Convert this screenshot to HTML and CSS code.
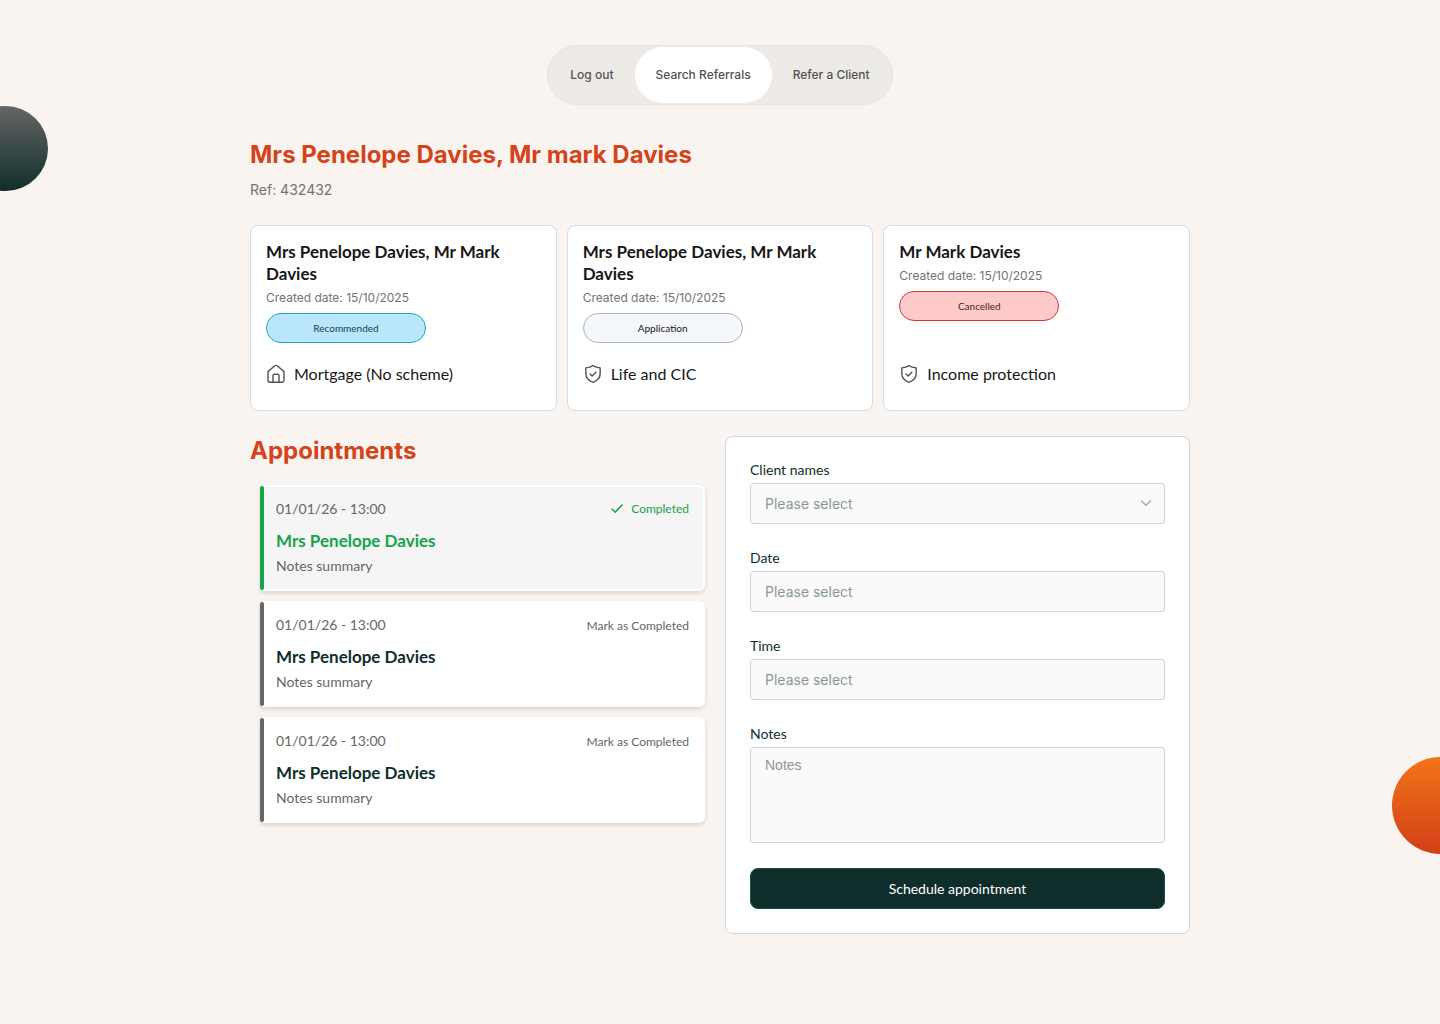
FILE: index.html
```html
<!DOCTYPE html>
<html lang="en">
<head>
  <meta charset="UTF-8">
  <meta name="viewport" content="width=device-width, initial-scale=1">
  <title>Mrs Penelope Davies, Mr mark Davies</title>
  <link rel="stylesheet" href="styles.css">
</head>
<body>

<!-- Background shapes -->
<div class="circle circle-dark"></div>
<div class="circle circle-orange"></div>

<!-- Shared icons -->
<svg class="sprite" aria-hidden="true">
  <symbol id="icon-shield" viewBox="0 0 24 24">
    <path d="M12 1.8 C10 3.6 6.8 4.5 3.4 4.6 V11.5 C3.4 17 7.2 20.4 12 22 C16.8 20.4 20.6 17 20.6 11.5 V4.6 C17.2 4.5 14 3.6 12 1.8 Z"/>
    <path d="M8.6 12 l2.4 2.4 l4.4 -4.4"/>
  </symbol>
</svg>

<nav class="nav">
  <a href="#">Log out</a>
  <a href="#" class="active">Search Referrals</a>
  <a href="#">Refer a Client</a>
</nav>

<main class="container">
  <h1>Mrs Penelope Davies, Mr mark Davies</h1>
  <p class="ref">Ref: 432432</p>

  <!-- Cases -->
  <section class="cases">
    <article class="case-card">
      <h3>Mrs Penelope Davies, Mr Mark Davies</h3>
      <p class="created">Created date: 15/10/2025</p>
      <span class="status recommended">Recommended</span>
      <div class="product">
        <svg viewBox="0 0 24 24">
          <path d="M2.4 10.4 c0 -1 .4 -1.8 1.2 -2.4 l6.6 -5.6 a2.8 2.8 0 0 1 3.6 0 l6.6 5.6 c.8 .6 1.2 1.4 1.2 2.4 V19.6 a2.2 2.2 0 0 1 -2.2 2.2 H4.6 a2.2 2.2 0 0 1 -2.2 -2.2 Z"/>
          <path d="M8.4 21.6 V14 a1.8 1.8 0 0 1 1.8 -1.8 h3.6 a1.8 1.8 0 0 1 1.8 1.8 V21.6"/>
        </svg>
        <span>Mortgage (No scheme)</span>
      </div>
    </article>
    <article class="case-card">
      <h3>Mrs Penelope Davies, Mr Mark Davies</h3>
      <p class="created">Created date: 15/10/2025</p>
      <span class="status application">Application</span>
      <div class="product">
        <svg><use href="#icon-shield"/></svg>
        <span>Life and CIC</span>
      </div>
    </article>
    <article class="case-card">
      <h3>Mr Mark Davies</h3>
      <p class="created">Created date: 15/10/2025</p>
      <span class="status cancelled">Cancelled</span>
      <div class="product">
        <svg><use href="#icon-shield"/></svg>
        <span>Income protection</span>
      </div>
    </article>
  </section>

  <div class="columns">
    <!-- Appointments -->
    <section class="appointments">
      <h2>Appointments</h2>
      <article class="appointment completed">
        <div class="appointment-top">
          <time>01/01/26 - 13:00</time>
          <span class="mark">
            <svg viewBox="0 0 12 12"><path d="M1 6 L4.2 9.2 L11 2"/></svg>
            Completed
          </span>
        </div>
        <h3>Mrs Penelope Davies</h3>
        <p>Notes summary</p>
      </article>
      <article class="appointment">
        <div class="appointment-top">
          <time>01/01/26 - 13:00</time>
          <button type="button" class="mark">Mark as Completed</button>
        </div>
        <h3>Mrs Penelope Davies</h3>
        <p>Notes summary</p>
      </article>
      <article class="appointment">
        <div class="appointment-top">
          <time>01/01/26 - 13:00</time>
          <button type="button" class="mark">Mark as Completed</button>
        </div>
        <h3>Mrs Penelope Davies</h3>
        <p>Notes summary</p>
      </article>
    </section>

    <!-- Schedule form -->
    <form class="schedule">
      <label for="client">Client names</label>
      <div class="select-wrap">
        <select id="client">
          <option value="">Please select</option>
        </select>
        <svg viewBox="0 0 12 12"><path d="M1.5 4 L6 8.2 L10.5 4"/></svg>
      </div>

      <label for="date">Date</label>
      <input type="text" id="date" placeholder="Please select">

      <label for="time">Time</label>
      <input type="text" id="time" placeholder="Please select">

      <label for="notes">Notes</label>
      <textarea id="notes" placeholder="Notes"></textarea>

      <button type="submit" class="submit">Schedule appointment</button>
    </form>
  </div>
</main>

</body>
</html>
```
FILE: styles.css
```css
* {
  box-sizing: border-box;
}

body {
  position: relative;
  min-height: 100vh;
  margin: 0;
  padding: 45px 20px 20px;
  overflow-x: hidden;
  background: #f9f4f0;
  color: #171717;
  font-family: Lato, sans-serif;
}

h1, h2, h3, p {
  margin: 0;
}

svg {
  fill: none;
  stroke: currentColor;
  stroke-linecap: round;
  stroke-linejoin: round;
}

.sprite {
  position: absolute;
  width: 0;
  height: 0;
}

/* Background shapes */
.circle {
  position: absolute;
  border-radius: 50%;
}

.circle-dark {
  top: 106px;
  left: -37px;
  width: 85px;
  height: 85px;
  background: linear-gradient(#666, #0f2e2b);
}

.circle-orange {
  top: 757px;
  right: -49px;
  width: 97px;
  height: 97px;
  background: linear-gradient(#f27419, #d23f17);
}

/* Navigation */
.nav {
  display: flex;
  width: fit-content;
  height: 60px;
  margin: 0 auto;
  padding: 1px;
  border: 1px solid #e8e5e2;
  border-radius: 30px;
  background: #eeebe6;
}

.nav a {
  display: flex;
  align-items: center;
  padding: 0 21px 2px;
  border-radius: 28px;
  color: #525252;
  font-family: Inter, sans-serif;
  font-size: 12px;
  font-weight: 500;
  text-decoration: none;
}

.nav .active {
  background: white;
}

.container {
  max-width: 940px;
  margin: 35px auto 0;
}

h1, h2 {
  color: #d4431a;
  font-family: Inter, sans-serif;
  font-size: 24px;
  line-height: 30px;
}

.ref {
  margin-top: 10px;
  color: #737373;
  font-family: Inter, sans-serif;
  font-size: 14px;
  line-height: 20px;
}

/* Cases */
.cases {
  display: grid;
  grid-template-columns: repeat(3, 1fr);
  gap: 10px;
  margin-top: 25px;
}

.case-card {
  display: flex;
  flex-direction: column;
  align-items: flex-start;
  padding: 15px 15px 24px;
  border: 1px solid #d3dde8;
  border-radius: 8px;
  background: white;
}

h3 {
  font-size: 17px;
  font-weight: 700;
  line-height: 22px;
}

.created {
  margin: 2px 0 4px;
  color: #737373;
  font-family: Inter, sans-serif;
  font-size: 12px;
  line-height: 22px;
}

.status {
  display: flex;
  align-items: center;
  justify-content: center;
  width: 160px;
  height: 30px;
  margin-bottom: 19px;
  border: 1px solid;
  border-radius: 15px;
  font-size: 10px;
}

.recommended {
  border-color: #2b9fc0;
  background: #bae6fd;
  color: #12404f;
}

.application {
  border-color: #a9b3c0;
  background: #f4f8fb;
}

.cancelled {
  border-color: #d9333c;
  background: #fecaca;
  color: #4d2020;
}

.product {
  display: flex;
  align-items: center;
  gap: 8px;
  margin-top: auto;
  font-size: 16px;
  line-height: 24px;
}

.product svg {
  width: 20px;
  height: 20px;
  color: #525252;
  stroke-width: 1.7;
}

/* Appointments */
.columns {
  display: grid;
  grid-template-columns: 1fr 1fr;
  align-items: start;
  gap: 10px;
  margin-top: 25px;
}

.appointments {
  display: flex;
  flex-direction: column;
  gap: 10px;
  padding: 0 10px;
}

.appointments h2 {
  margin: 0 0 9px -10px;
}

.appointment {
  padding: 12px 14px 13px 12px;
  border: 2px solid white;
  border-left: 4px solid #666;
  border-radius: 4px 6px 6px 4px;
  background: white;
  box-shadow: 0 2px 4px rgba(0, 0, 0, 0.14);
  color: #666;
  font-size: 14px;
  line-height: 20px;
}

.appointment-top {
  display: flex;
  align-items: center;
  justify-content: space-between;
  margin-bottom: 11px;
}

.appointment h3 {
  margin-bottom: 4px;
  color: #0f2e2b;
}

.mark {
  display: flex;
  align-items: center;
  gap: 8px;
  padding: 0;
  border: none;
  background: none;
  color: #666;
  font-family: inherit;
  font-size: 12px;
}

.mark svg {
  width: 12px;
  height: 12px;
  stroke-width: 1.5;
}

.completed {
  border-left-color: #16a34a;
  background: #f5f5f5;
}

.completed h3, .completed .mark {
  color: #16a34a;
}

/* Schedule form */
.schedule {
  padding: 24px;
  border: 1px solid #cbd5e1;
  border-radius: 8px;
  background: white;
}

label {
  display: block;
  margin-bottom: 4px;
  color: #0f2e2b;
  font-size: 14px;
  line-height: 18px;
}

input, select, textarea {
  display: block;
  width: 100%;
  height: 41px;
  margin-bottom: 25px;
  padding: 0 14px;
  border: 1px solid #cbd5e1;
  border-radius: 3px;
  background: #fafafa;
  color: #8a9996;
  font-family: Inter, sans-serif;
  font-size: 14px;
}

select {
  appearance: none;
}

textarea {
  height: 96px;
  padding-top: 9px;
  font-family: "Liberation Sans", sans-serif;
  resize: none;
}

::placeholder {
  color: #8a9996;
}

.select-wrap {
  position: relative;
}

.select-wrap svg {
  position: absolute;
  top: 14px;
  right: 13px;
  width: 12px;
  height: 12px;
  color: #aaa;
  stroke-width: 1.5;
}

.submit {
  width: 100%;
  height: 41px;
  border: 1px solid #17504a;
  border-radius: 8px;
  background: #0f2e2b;
  color: white;
  font-family: inherit;
  font-size: 14px;
  cursor: pointer;
}
```
